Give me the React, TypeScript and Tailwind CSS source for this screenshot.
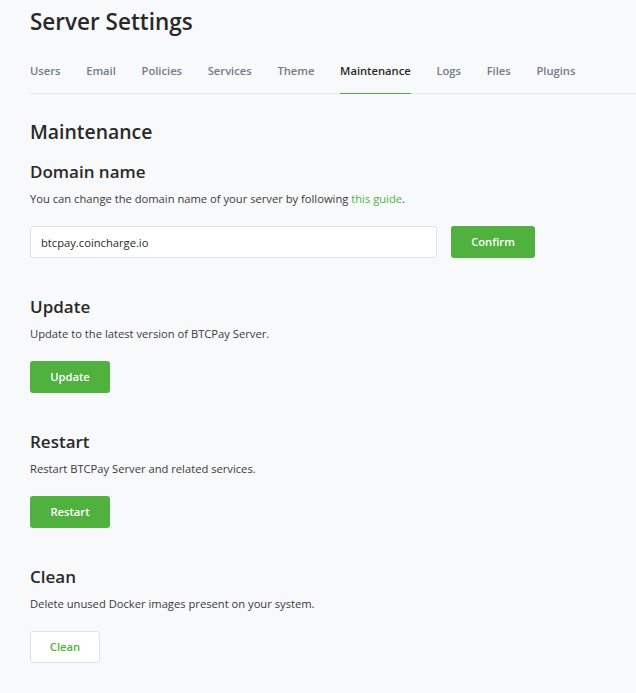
const tabs = [
  "Users",
  "Email",
  "Policies",
  "Services",
  "Theme",
  "Maintenance",
  "Logs",
  "Files",
  "Plugins",
];

function Section({
  title,
  children,
}: {
  title: string;
  children: React.ReactNode;
}) {
  return (
    <div className="mb-[37px]">
      <h3 className="text-[17px] leading-[24px] font-semibold text-[#292929] mb-[7px]">
        {title}
      </h3>
      {children}
    </div>
  );
}

export default function App() {
  return (
    <div
      className="min-h-[693px] bg-[#f8f9fa] pl-[30px] pt-[6px] text-[#292929]"
      style={{ fontFamily: '"Open Sans", "Liberation Sans", sans-serif' }}
    >
      <h1 className="text-[22.5px] leading-[32px] font-semibold text-[#292929] mb-[25px]">
        Server Settings
      </h1>

      <nav className="flex gap-[25.7px] border-b border-[#e4e6e9] mb-[24px]">
        {tabs.map((tab) => (
          <span
            key={tab}
            className={`text-[11.2px] leading-[16px] font-semibold pb-[14px] -mb-px ${
              tab === "Maintenance"
                ? "text-[#292929] border-b-[1.5px] border-[#51b13e]"
                : "text-[#727b86]"
            }`}
          >
            {tab}
          </span>
        ))}
      </nav>

      <h2 className="text-[19.4px] leading-[28px] font-semibold text-[#292929] mb-[14px]">
        Maintenance
      </h2>

      <Section title="Domain name">
        <p className="text-[11.2px] leading-[16px] text-[#3a3a3a] mb-[19px]">
          You can change the domain name of your server by following{" "}
          <a href="#" className="text-[#51b13e]">
            this guide
          </a>
          .
        </p>
        <div className="flex items-center gap-[14px]">
          <input
            readOnly
            value="btcpay.coincharge.io"
            className="w-[407px] h-[32px] px-[10px] bg-white border border-[#dfe2e6] rounded-[3px] text-[11.2px] text-[#292929] outline-none"
          />
          <button className="w-[84px] h-[32px] bg-[#51b13e] text-white text-[11.2px] font-semibold rounded-[3px]">
            Confirm
          </button>
        </div>
      </Section>

      <Section title="Update">
        <p className="text-[11.2px] leading-[16px] text-[#3a3a3a] mb-[19px]">
          Update to the latest version of BTCPay Server.
        </p>
        <button className="w-[80px] h-[32px] bg-[#51b13e] text-white text-[11.2px] font-semibold rounded-[3px]">
          Update
        </button>
      </Section>

      <Section title="Restart">
        <p className="text-[11.2px] leading-[16px] text-[#3a3a3a] mb-[19px]">
          Restart BTCPay Server and related services.
        </p>
        <button className="w-[80px] h-[32px] bg-[#51b13e] text-white text-[11.2px] font-semibold rounded-[3px]">
          Restart
        </button>
      </Section>

      <Section title="Clean">
        <p className="text-[11.2px] leading-[16px] text-[#3a3a3a] mb-[19px]">
          Delete unused Docker images present on your system.
        </p>
        <button className="w-[70px] h-[32px] bg-white border border-[#dfe2e6] text-[#51b13e] text-[11.2px] font-semibold rounded-[3px]">
          Clean
        </button>
      </Section>
    </div>
  );
}
